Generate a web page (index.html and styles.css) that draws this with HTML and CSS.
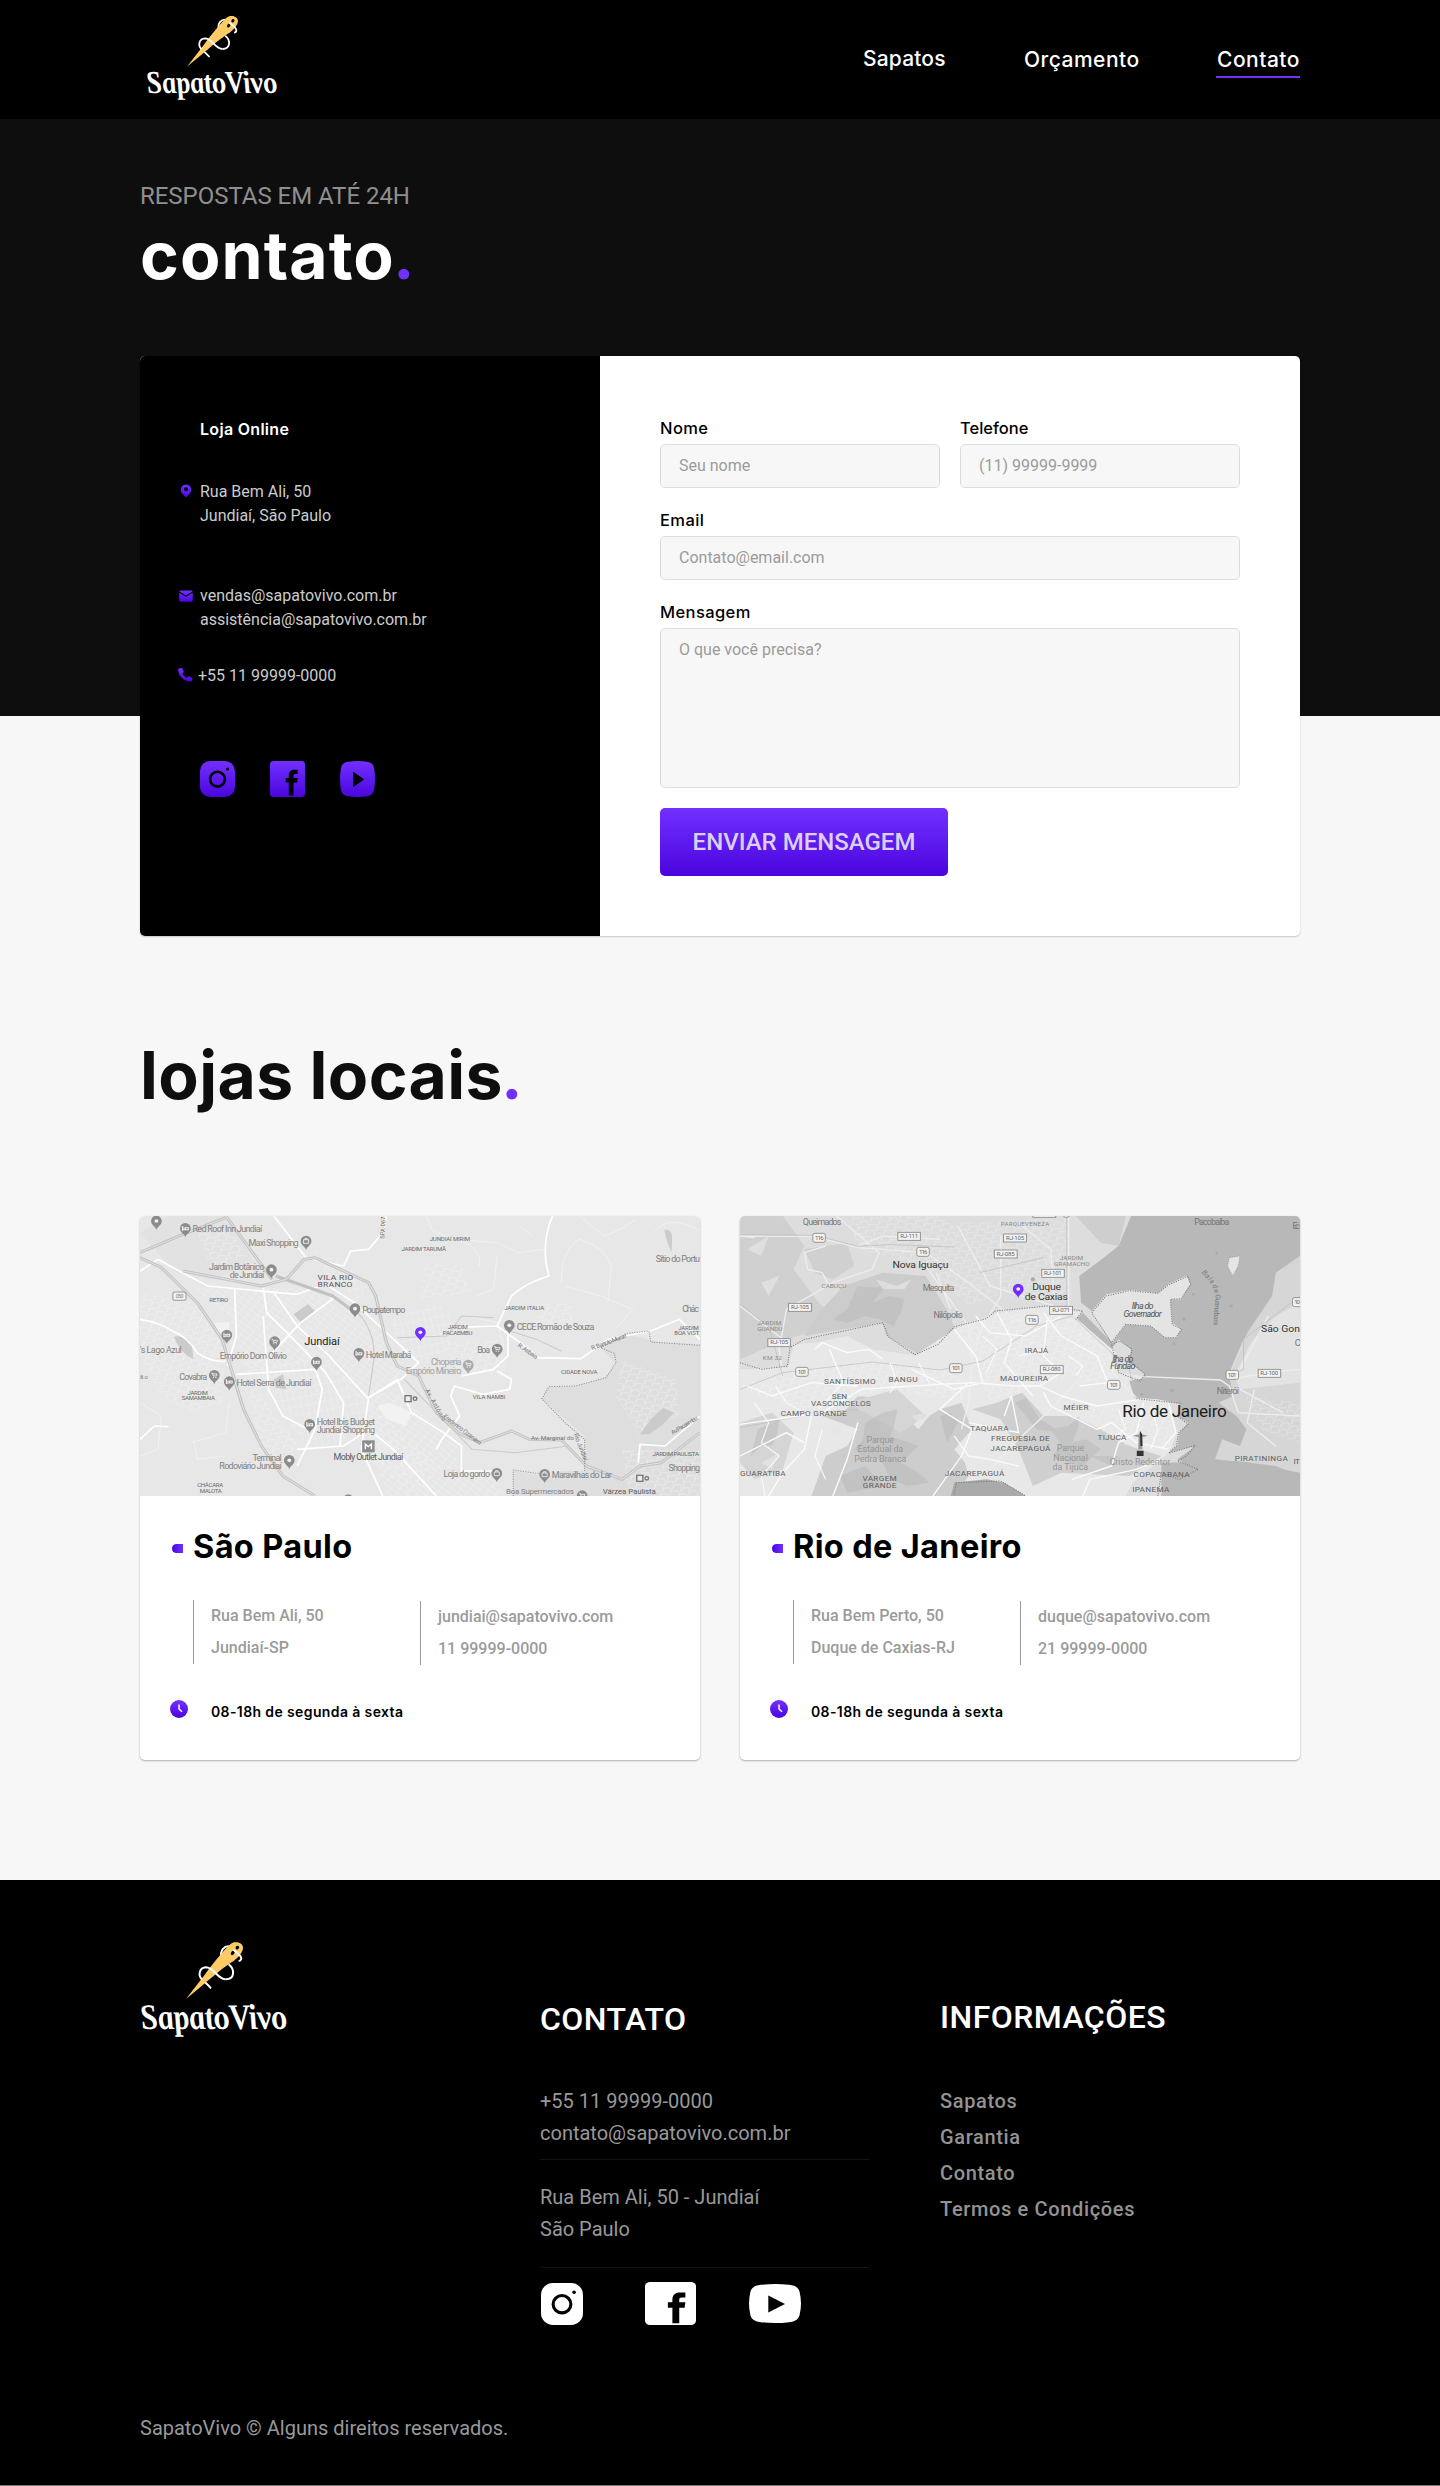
FILE: index.html
```html
<!DOCTYPE html>
<html lang="pt-BR">
<head>
<meta charset="utf-8">
<title>SapatoVivo | Contato</title>
<link rel="stylesheet" href="styles.css">
</head>
<body>

<svg class="sprite" width="0" height="0" aria-hidden="true">
  <defs>
    <linearGradient id="violet" x1="0" y1="0" x2="0" y2="1"><stop offset="0" stop-color="#7230ff"/><stop offset="1" stop-color="#4a05de"/></linearGradient>
    <linearGradient id="violet-side" x1="0" y1="0" x2="1" y2="0"><stop offset="0" stop-color="#4a05de"/><stop offset="1" stop-color="#7230ff"/></linearGradient>
    <symbol id="logo" viewBox="30 90 450 300">
      <path d="M214 206C220 214 230 220 243 235" fill="none" stroke="#fff" stroke-width="6"/>
      <path d="M302 110C284 104 268 122 275 144M296 163C315 178 315 207 287 208" fill="none" stroke="#fff" stroke-width="6"/>
      <path d="M168 267L222 197C252 155 288 113 303 101C315 92 338 97 339 112C340 125 328 140 312 152C284 169 250 198 215 228Z" fill="#ffcb66"/>
      <ellipse cx="322" cy="113" rx="5" ry="6" transform="rotate(35 322 113)" fill="#000"/>
      <ellipse cx="308" cy="129" rx="5" ry="7" transform="rotate(40 308 129)" fill="#000"/>
      <path d="M287 208C262 207 252 172 228 172C208 173 203 196 216 208M310 119C316 124 322 128 331 138C336 145 334 152 326 153" fill="none" stroke="#fff" stroke-width="6"/>
      <text transform="translate(38 357) skewX(13)" font-family="'Liberation Serif',serif" font-style="italic" font-weight="700" font-size="108" textLength="440" lengthAdjust="spacingAndGlyphs" fill="#fff">SapatoVivo</text>
    </symbol>
    <symbol id="instagram" viewBox="0 0 35 36" preserveAspectRatio="none">
      <rect width="35" height="36" rx="10" ry="10"/><circle cx="17.5" cy="18.2" r="7.4" fill="none" stroke="#000" stroke-width="2.6"/><circle cx="27.6" cy="8" r="1.5" fill="#000"/>
    </symbol>
    <symbol id="facebook" viewBox="0 0 35 36" preserveAspectRatio="none">
      <rect width="35" height="36" rx="3.5"/><path d="M18.8 34.5V21.5H15.7V16.9H18.8V14.4C18.8 10.8 20.8 8.7 24 8.7H27.7V13H25.2C24 13 23.5 13.6 23.5 15V16.9H27.7L27.2 21.5H23.5V34.5Z" fill="#000"/>
    </symbol>
    <symbol id="youtube" viewBox="0 0 35 36" preserveAspectRatio="none">
      <path d="M8 .8Q17.5-.8 27 .8Q33 1.5 34 7Q36 18 34 29Q33 34.500 27 35.2Q17.500 36.800 8 35.200Q2 34.500 1 29Q-1 18 1 7Q2 1.500 8 .8Z"/><path d="M13 10.500L24.200 18.500L13 26.300Z" fill="#000"/>
    </symbol>
    <g id="pin"><path d="M0 26C-2 16-15 12-15-1A15 16 0 1 1 15-1C15 12 2 16 0 26Z"/><circle cy="-1" r="5.500" fill="#f2f2f2"/></g>
    <g id="pin-bed"><path d="M0 26C-2 16-15 12-15-1A15 16 0 1 1 15-1C15 12 2 16 0 26Z"/><path d="M-8-8V6M-8 3H8V-3H0V2M-4-4V0" fill="none" stroke="#f2f2f2" stroke-width="3"/></g>
    <g id="pin-cart"><path d="M0 26C-2 16-15 12-15-1A15 16 0 1 1 15-1C15 12 2 16 0 26Z"/><path d="M-9-8H-5L-3 1H6L8-5H-4" fill="none" stroke="#f2f2f2" stroke-width="2.500"/><path d="M-4 4h3v3h-3zM3 4h3v3h-3z" fill="#f2f2f2"/></g>
    <g id="pin-bag"><path d="M0 26C-2 16-15 12-15-1A15 16 0 1 1 15-1C15 12 2 16 0 26Z"/><path d="M-7-5H7V6H-7ZM-3-5V-9H3V-5" fill="none" stroke="#f2f2f2" stroke-width="2.500"/></g>
    <pattern id="blocks-a" width="22" height="15" patternUnits="userSpaceOnUse" patternTransform="rotate(38)"><path d="M0 0H22M0 0V15" fill="none" stroke="#fafafa" stroke-width="1.600"/></pattern>
    <pattern id="blocks-b" width="17" height="26" patternUnits="userSpaceOnUse" patternTransform="rotate(-12)"><path d="M0 0H17M0 0V26" fill="none" stroke="#f8f8f8" stroke-width="1.500"/></pattern>
    <pattern id="blocks-c" width="24" height="20" patternUnits="userSpaceOnUse" patternTransform="rotate(22)"><path d="M0 0L9 8L24 0M9 8V20" fill="none" stroke="#f6f6f6" stroke-width="1.500"/></pattern>
  </defs>
</svg>

<header class="topbar">
  <svg class="logo logo-top" role="img" aria-label="SapatoVivo"><use href="#logo"/></svg>
  <nav class="nav">
    <a class="nav-link nav-sapatos">Sapatos</a>
    <a class="nav-link nav-orcamento">Orçamento</a>
    <a class="nav-link nav-contato">Contato</a>
  </nav>
</header>

<main class="main">
  <p class="kicker">RESPOSTAS EM ATÉ 24H</p>
  <h1 class="title title-light">contato<span class="dot">.</span></h1>

  <section class="contact">
    <div class="online">
      <h2 class="online-title">Loja Online</h2>
      <div class="row row-address">
        <svg class="row-icon" viewBox="0 0 16 24"><path fill-rule="evenodd" d="M8 4.500A5.300 5.300 0 0 1 13.300 9.800C13.300 13 10 15.500 8 17.500C6 15.500 2.700 13 2.700 9.800A5.300 5.300 0 0 1 8 4.500ZM8 7.300A2 2 0 1 0 8 11.300A2 2 0 1 0 8 7.300Z" fill="url(#violet)"/></svg>
        <p>Rua Bem Ali, 50<br>Jundiaí, São Paulo</p>
      </div>
      <div class="row row-mail">
        <svg class="row-icon" viewBox="0 0 16 24"><path d="M2.500 6.500H13.500L14.800 7.500L8 11.500L1.200 7.500ZM1.200 8.800L8 12.800L14.800 8.800V16Q14.800 17.800 13 17.800H3Q1.200 17.800 1.200 16Z" fill="url(#violet)"/></svg>
        <p>vendas@sapatovivo.com.br<br>assistência@sapatovivo.com.br</p>
      </div>
      <div class="row row-phone">
        <svg class="row-icon" viewBox="0 0 16 24"><path d="M.6 4.700L3.300 4.100Q4.200 4 4.600 4.900L5.800 7.500Q6 8.300 5.300 8.800L4.200 9.700Q6 12.500 8.800 14L9.800 12.700Q10.300 12.100 11.200 12.400L13.900 13.500Q14.700 14 14.500 14.800L14 16.700Q13.700 17.500 12.800 17.500Q7.500 17.500 3.800 13.800Q.2 10 0 5.700Q0 4.900.6 4.700Z" fill="url(#violet)"/></svg>
        <p>+55 11 99999-0000</p>
      </div>
      <div class="social">
        <svg class="social-icon"><use href="#instagram"/></svg>
        <svg class="social-icon"><use href="#facebook"/></svg>
        <svg class="social-icon"><use href="#youtube"/></svg>
      </div>
    </div>
    <form class="form">
      <div class="field"><label class="label" for="nome">Nome</label><input class="input" id="nome" placeholder="Seu nome"></div>
      <div class="field"><label class="label label-tight" for="telefone">Telefone</label><input class="input" id="telefone" placeholder="(11) 99999-9999"></div>
      <div class="field field-wide"><label class="label" for="email">Email</label><input class="input" id="email" placeholder="Contato@email.com"></div>
      <div class="field field-wide"><label class="label" for="mensagem">Mensagem</label><textarea class="input input-area" id="mensagem" placeholder="O que você precisa?"></textarea></div>
      <button class="send" type="button">ENVIAR MENSAGEM</button>
    </form>
  </section>

  <h2 class="title title-stores">lojas locais<span class="dot">.</span></h2>

  <section class="stores">
    <article class="store">
      <svg class="map" viewBox="0 0 1568 840" preserveAspectRatio="none">
        <rect width="1568" height="840" fill="#e7e7e7"/>
        <path d="M1568 385L1440 375L1360 355L1290 395L1335 445L1300 485L1220 510L1145 512L1125 548L1245 660V765L1320 790L1350 840H1568Z" fill="#dedede"/>
        <path d="M1045 765L1130 780L1180 765H1320L1350 840H1045Z" fill="#dfdfdf"/>
        <path d="M0 50L80 0H250L320 140L200 190L100 170Z" fill="#e2e2e2"/>
        <path d="M150 215H520L690 370L740 470L620 560L520 440L300 470L250 300Z" fill="url(#blocks-a)"/>
        <path d="M280 430H520L640 560L850 760L750 840L600 660L480 700L380 580Z" fill="url(#blocks-b)"/>
        <path d="M640 530L720 530L890 690V760L1000 780L1020 840H700L640 700Z" fill="url(#blocks-a)"/>
        <path d="M480 100L560 130L640 200L620 260L520 170ZM700 310L830 260L880 300L850 450L730 420Z" fill="url(#blocks-b)"/>
        <path d="M0 230L160 260L240 400L230 560L150 590L60 540L0 420ZM300 480L380 600L450 690L400 760L330 700Z" fill="url(#blocks-c)"/>
        <path d="M160 50L260 50L300 120L200 160ZM800 140L900 150L930 230L780 250ZM1130 260H1210V340L1100 320ZM1350 430L1500 490L1510 600L1400 660L1330 540ZM850 380L1000 370L1030 480L870 470ZM1350 700H1568V840H1370Z" fill="url(#blocks-c)"/>
        <path d="M430 295L470 265L490 285L452 322ZM95 362Q120 355 145 385L150 430Q110 410 95 362ZM1468 42Q1492 38 1490 75L1488 110Q1475 80 1468 42ZM1400 655L1430 610L1465 575L1495 590L1460 630L1425 655ZM375 490L400 475L410 520L380 515Z" fill="#cbcbcb"/>
        <path d="M210 320L250 318V355L215 345ZM665 570L700 560L760 590L745 630L690 610Z" fill="#f2f2f2"/>
        <g fill="none" stroke="#f5f5f5" stroke-width="2">
          <path d="M800 0L820 45L880 70L1000 80L1060 110L1130 100M1230 0L1300 60L1345 40L1390 10M1180 200Q1180 100 1230 70Q1300 90 1320 150L1310 260M1000 120L990 220L940 240M0 560L60 600L50 700L0 720M145 680L240 650L250 560M920 300L1000 320L1020 400M880 70Q960 90 950 150M1190 210L1290 240L1380 280L1330 340M1060 30L1100 60M1440 50Q1480 -10 1568 45M230 720L160 730L150 670"/>
        </g>
        <g fill="none" stroke="#fff" stroke-width="5" stroke-linejoin="round">
          <path d="M0 310Q60 320 90 345Q130 360 160 410Q200 440 240 435M0 165L50 130L110 165L190 210L440 235L520 205L600 260L780 440L730 490L640 545L620 700L680 840M265 220L270 360L245 450M345 215L355 290L430 370L520 470L570 560L560 690M345 300L360 520L400 600L470 640M270 475L490 460L505 440M490 460L510 520L490 640L440 750M375 230L440 330L530 420L640 550M640 545L720 490L760 590L850 650L900 690V765L1000 765"/>
          <path d="M375 0L465 125L570 150L590 105L640 100L680 50L690 0M1155 0Q1120 90 1145 180Q1080 200 1040 240L1000 330L870 335M1000 330L1090 400L1115 425L1235 428L1310 370L1430 345L1510 310L1568 370M1030 350V420L990 460L900 480M1000 465L1040 490L1035 520L960 535L880 510L870 540L895 600L845 670L830 700M550 240L450 320L370 410M440 700L570 690L640 640L710 700L830 840M1395 740L1400 685L1470 690L1568 600M0 670L40 630L80 632"/>
        </g>
        <g fill="none" stroke-linejoin="round">
          <g stroke="#c2c2c2" stroke-width="9"><path d="M0 125L60 155L160 260L230 370L290 580L340 690L400 780L490 840M0 110L120 55L240 5M120 165L340 210L410 190L460 130L490 125L640 200L660 240L690 380L720 450L780 480L830 590L890 650L950 680L1040 645L1090 670L1180 672L1250 750L1350 790L1400 750L1460 740L1568 650M240 0L370 190M380 180L540 240L590 280"/></g>
          <g stroke="#e1e1e1" stroke-width="3"><path d="M0 125L60 155L160 260L230 370L290 580L340 690L400 780L490 840M0 110L120 55L240 5M120 165L340 210L410 190L460 130L490 125L640 200L660 240L690 380L720 450L780 480L830 590L890 650L950 680L1040 645L1090 670L1180 672L1250 750L1350 790L1400 750L1460 740L1568 650M240 0L370 190"/></g>
          <path d="M600 280Q660 340 655 430L640 540M720 365L860 360L900 300L990 305M740 490L830 590L930 700L1050 710L1200 690M1020 340L1110 370L1180 405" stroke="#cacaca" stroke-width="3"/>
          <path d="M1568 388L1430 378L1425 345L1365 352L1290 395L1328 412L1333 440L1305 485L1220 510L1145 512L1125 548L1190 620L1245 670V765M1045 840V762L1130 775" stroke="#8d8d8d" stroke-width="3" stroke-dasharray="3 4"/>
        </g>
        <rect x="92" y="228" width="37" height="25" rx="6" fill="#f2f2f2" stroke="#999" stroke-width="3"/>
        <g fill="#8c8c8c">
          <use href="#pin" x="46" y="16"/><use href="#pin-bed" x="127" y="38"/><use href="#pin-bag" x="465" y="76"/><use href="#pin" x="368" y="162"/><use href="#pin" x="602" y="279"/><use href="#pin" x="1034" y="329"/><use href="#pin-bed" x="243" y="358"/><use href="#pin-cart" x="377" y="378"/><use href="#pin-bed" x="613" y="413"/><use href="#pin-bed" x="494" y="439"/><use href="#pin-cart" x="1000" y="400"/><use href="#pin-cart" x="208" y="479"/><use href="#pin-bed" x="250" y="498"/><use href="#pin-bed" x="475" y="626"/><use href="#pin" x="418" y="734"/><use href="#pin-bag" x="999" y="773"/><use href="#pin-bag" x="1133" y="776"/><use href="#pin-cart" x="1238" y="840"/><use href="#pin" x="583" y="852"/><use href="#pin-cart" x="919" y="448" fill="#aaa"/>
          <rect x="622" y="673" width="35" height="36"/><path d="M631 700V684L639 692L648 684V700" fill="none" stroke="#fff" stroke-width="4"/>
        </g>
        <g fill="#eee" stroke="#777" stroke-width="4"><rect x="742" y="539" width="17" height="18"/><circle cx="770" cy="548" r="5"/><rect x="1391" y="778" width="17" height="18"/><circle cx="1419" cy="787" r="5"/></g>
        <use href="#pin" x="785" y="350" fill="#7230ff"/>
        <g class="map-text">
          <text x="100" y="246" font-size="15" textLength="22">050</text>
          <text x="147" y="48" textLength="195">Red Roof Inn Jundiaí</text><text x="304" y="89" textLength="140">Maxi Shopping</text><text x="193" y="162" textLength="155">Jardim Botânico</text><text x="251" y="186" textLength="97">de Jundiaí</text><text x="622" y="290" textLength="121">Poupatempo</text><text x="1055" y="341" textLength="217">CECE Romão de Souza</text><text x="632" y="426" textLength="128">Hotel Marabá</text><text x="223" y="429" textLength="188">Empório Dom Olívio</text><text x="0" y="411" textLength="117">'s Lago Azul</text><text x="944" y="411" textLength="36">Boa</text><text x="110" y="491" textLength="78">Covabra</text><text x="270" y="511" textLength="210">Hotel Serra de Jundiaí</text><text x="0" y="488" font-size="17" textLength="22">ão</text><text x="495" y="626" textLength="163">Hotel Ibis Budget</text><text x="495" y="650" textLength="163">Jundiaí Shopping</text><text x="315" y="734" textLength="82">Terminal</text><text x="222" y="758" textLength="175">Rodoviário Jundiaí</text><text x="850" y="784" textLength="130">Loja do gordo</text><text x="1153" y="787" textLength="168">Maravilhas do Lar</text><text x="1480" y="766" textLength="88">Shopping</text><text x="1444" y="138" textLength="124">Sítio do Portu</text><text x="1518" y="287" textLength="47">Chác</text><text x="1025" y="834" font-size="22" textLength="190">Boa Supermercados</text>
          <g fill="#a2a2a2"><text x="815" y="448" textLength="85">Choperia</text><text x="744" y="473" textLength="156">Empório Mineiro</text></g>
          <g fill="#5c5c5c"><text x="542" y="733" textLength="195">Mobly Outlet Jundiaí</text><text x="1296" y="834" font-size="22" textLength="148">Várzea Paulista</text></g>
          <g class="map-area"><text x="811" y="75" textLength="113">JUNDIAÍ MIRIM</text><text x="732" y="104" textLength="125">JARDIM TARUMÃ</text><text x="194" y="259" textLength="53">RETIRO</text><text x="1020" y="281" textLength="112">JARDIM ITALIA</text><text x="862" y="340" textLength="56">JARDIM</text><text x="848" y="356" textLength="83">PACAEMBU</text><text x="1507" y="341" textLength="58">JARDIM</text><text x="1496" y="357" textLength="70">BOA VIST</text><text x="1179" y="473" textLength="102">CIDADE NOVA</text><text x="932" y="548" textLength="91">VILA NAMBI</text><text x="133" y="537" textLength="57">JARDIM</text><text x="117" y="552" textLength="93">SAMAMBAIA</text><text x="1435" y="719" textLength="130">JARDIM PAULISTA</text><text x="160" y="812" textLength="73">CHÁCARA</text><text x="167" y="832" textLength="62">MALOTA</text><text transform="translate(684 68) rotate(-87)" textLength="66">SPA-067</text></g>
          <g fill="#555"><text x="497" y="192" font-size="24" textLength="100">VILA RIO</text><text x="497" y="214" font-size="24" textLength="98">BRANCO</text></g>
          <g fill="#777"><text transform="translate(798 523) rotate(62)" font-size="18" textLength="105">Av. Antônio</text><text transform="translate(848 604) rotate(39)" font-size="18" textLength="132">Frederico Ozanam</text><text x="1095" y="672" font-size="18" textLength="120">Av. Marginal do</text><text transform="translate(1214 655) rotate(70)" font-size="18" textLength="85">Rio Jundiaí</text><text transform="translate(1056 391) rotate(36)" font-size="18" textLength="65">R. Atibaia</text><text transform="translate(1266 403) rotate(-22)" font-size="18" textLength="105">R. Bartolo Murari</text><text transform="translate(1492 656) rotate(-33)" font-size="18" textLength="85">Av. Pacaembu</text></g>
          <text x="460" y="387" font-size="31" fill="#1c1c1c" textLength="99">Jundiaí</text>
        </g>
      </svg>
      <div class="store-body">
        <h3 class="store-title"><svg class="tag" viewBox="0 0 11 9"><path d="M4 0H11V9H4Q0 8.500 0 4.500T4 0Z" fill="url(#violet-side)"/></svg>São Paulo</h3>
        <div class="store-info"><p class="col">Rua Bem Ali, 50<br>Jundiaí-SP</p><p class="col col-right">jundiai@sapatovivo.com<br>11 99999-0000</p></div>
        <p class="hours"><svg class="clock" viewBox="0 0 18 18"><circle cx="9" cy="9" r="9" fill="url(#violet)"/><path d="M9 4.500V9L12 11.800" fill="none" stroke="#fff" stroke-width="1.500"/></svg>08-18h de segunda à sexta</p>
      </div>
    </article>

    <article class="store">
      <svg class="map" viewBox="0 0 1568 840" preserveAspectRatio="none">
        <rect width="1568" height="840" fill="#dddddd"/>
        <path d="M0 0H120L180 90L150 160L220 260L290 320L130 370L0 430ZM180 100L300 80L320 150L260 190L210 170Z" fill="#d0d0d0"/>
        <path d="M290 210L400 170L520 180L590 300L600 340L500 415L410 360L400 320L180 360L220 290Z" fill="#cccccc"/>
        <path d="M940 0H1080L1060 90L1010 80Z" fill="#cecece"/>
        <path d="M0 460L135 455L150 385L210 380L300 360L370 400L490 418L600 340L720 290L870 270L960 290L1040 390L1060 470L1130 480L1110 545L1200 550L1225 650L1200 710L1100 800L1080 840H0Z" fill="#e8e8e8"/>
        <path d="M230 600L290 590L330 540L380 545L420 590L460 600L500 640L530 600L560 580L620 560L650 640L600 700L630 740L640 780L600 840H200L240 720L300 690L330 640Z" fill="#cdcdcd"/>
        <path d="M650 580L720 560L790 530L850 600L930 600L1010 640L1090 690L1180 720L1090 780L900 770L820 810L780 700L730 610Z" fill="#cfcfcf"/>
        <path d="M0 620L90 590L150 650L120 760L40 790L0 740ZM300 560L440 520L520 600L450 650Z" fill="#d5d5d5"/>
        <g fill="#b4b4b4" opacity=".4"><path d="M350 620L400 590L440 580L430 640L420 660L500 690L470 720L450 740L500 770L530 800L470 810L420 790L400 740L370 720L350 730L320 700L345 670ZM870 640L920 630L950 600L945 640L930 680L970 670L1010 700L960 750L920 740L880 720L895 680ZM50 640L110 610L105 650L90 690L60 690L30 720Z"/><path d="M330 210L380 215L420 200L395 230L370 260L420 240L460 250L450 290L430 330L390 310L350 300L300 320L260 310L300 280ZM560 600L590 590L610 620L580 680ZM280 780L350 750L400 810L300 830ZM770 560L800 545L840 610L900 650L830 640ZM980 720L1060 720L1040 750Z"/></g>
        <path d="M380 190L440 210L480 190L460 220L400 220ZM250 640L290 620L270 660ZM480 600L520 590L500 620ZM60 740L110 710L90 760ZM20 100L80 60L60 120ZM60 200L110 180L80 240Z" fill="#e6e6e6" opacity=".7"/>
        <path d="M1095 0L1060 90L1000 140L950 180L955 260L985 285L1025 235L1090 222L1170 232L1200 205L1250 180L1260 205L1235 250L1205 250L1210 320L1235 340L1220 365L1190 365L1150 330L1080 325L1042 380L960 290L940 310L1040 400L1060 370L1095 400L1090 440L1130 470L1135 485L1090 495L1105 545L1170 550L1235 565L1225 600L1255 620L1230 650L1225 690L1200 710L1275 690L1225 730L1280 760L1230 790L1180 770L1190 840H1568V740L1500 690L1480 600L1420 580L1380 500L1370 470L1410 370L1500 280L1568 240V0Z" fill="#b8b8b8"/>
        <path d="M985 288L1025 237L1090 222L1170 232L1200 205L1250 180L1260 205L1235 250L1205 250L1210 320L1235 340L1220 365L1190 365L1150 330L1080 325L1042 380Z" fill="#e4e4e4"/>
        <path d="M1568 120L1500 170L1490 240L1420 350L1395 420L1370 480L1380 540L1340 560L1390 600L1418 640L1400 690L1350 670L1330 730L1420 740L1568 770Z" fill="#d6d6d6"/>
        <path d="M1500 300L1568 260V500L1400 520L1385 480L1430 380Z" fill="#e3e3e3"/>
        <path d="M1180 740L1390 735L1500 750L1568 780V840H1180Z" fill="#b8b8b8"/>
        <path d="M600 800L690 790L740 800L800 840H590Z" fill="#aaa"/>
        <path d="M1370 125L1400 120L1395 150L1380 180L1365 150Z" fill="#e5e5e5" stroke="#888" stroke-width="2" stroke-dasharray="3 4"/>
        <path d="M0 510L240 450L380 430L560 460L640 480L620 560L420 520L200 580L60 540ZM610 330L720 290L940 300L1030 400L1040 520L920 480L700 560L650 440Z" fill="url(#blocks-c)"/>
        <path d="M300 0H560L680 90L720 240L640 270L520 150L330 100ZM600 20L920 10L930 260L760 250ZM960 570H1210V700L1080 690L1000 640ZM1410 540L1568 560V680L1460 640Z" fill="url(#blocks-c)" opacity=".8"/>
        <g fill="none" stroke="#ededed" stroke-width="4">
          <path d="M0 60L210 62L330 95L520 110L640 200L770 310L920 340L1030 400L1050 480L1110 545M270 0L390 110L370 160L260 200L130 280L110 400L120 480M920 0V290L1050 410L1040 480L940 500L870 580L770 680L700 760M520 150L640 330L650 430L640 560L620 640M550 170L590 280M330 90L400 60L560 70M730 60V240L680 330L650 430M0 60L40 65M0 270L120 370M610 30L700 210L880 270M780 20L870 100L880 240M240 90L180 110L190 160L230 170L250 210"/>
          <path d="M1135 482L1345 492L1370 510L1395 590L1568 600M1370 490L1480 470L1568 460M1480 300L1400 460M1400 520L1520 590M1440 520L1420 620L1500 690"/>
        </g>
        <g fill="none" stroke="#bcbcbc" stroke-width="2"><path d="M0 56L210 58L330 91L420 86L600 93M0 520L120 470L370 438L560 462L680 435L830 330L930 300L1090 460L1110 540M915 0V280M1130 474L1345 487L1410 460V370L1568 240M670 170L850 125M120 480L80 330L0 265M0 635L220 590L330 580"/></g>
        <g fill="none" stroke="#fbfbfb" stroke-width="4" stroke-linejoin="round">
          <path d="M0 625L230 590L340 520L480 510L650 500L770 510L840 510L900 540L1000 570L1120 550M20 510L90 540L200 500L330 510M250 400L290 500L220 580M600 340L660 420L680 500L600 520L480 460M720 290L760 370L740 440L820 540M850 290L900 360L1000 420L1030 500L950 510M860 310L850 420L900 470L840 510M640 620L780 650L760 540L740 600M330 620L300 730L260 840M200 600L180 700L120 770L80 840M0 720L130 650L180 680M540 840L620 720L650 640L560 580L640 500M850 530L870 570L1000 640L1040 620L1110 680L1200 700M1130 560L1110 650L1060 680L1040 750L930 790M960 840L980 790L1110 760L1180 730M1200 560L1220 650L1180 700M600 660L640 720L700 730L780 750M210 400L230 380L300 410L360 400L400 430M660 300L700 350L800 360L900 300"/>
          <path d="M40 560L80 620L60 680L110 720L60 780L70 840M230 640L210 720L240 790M100 510L130 560L180 590M420 440L440 500L420 530M500 440L530 500M690 470L720 400L680 360M780 420L850 400M920 420L960 450L940 480M1060 580L1080 640L1050 660M1150 570L1170 640L1150 700" stroke-width="3"/>
        </g>
        <path d="M0 440L60 460L133 450L140 395L180 370L400 320L415 362L490 416L555 385L600 332L690 308L715 285L860 270L960 285L940 310" fill="none" stroke="#777" stroke-width="3" stroke-dasharray="3 4"/>
        <path d="M985 290L1025 240L1090 224L1170 232L1200 207L1255 180L1262 205L1235 248L1205 250L1210 325L1237 340L1220 365L1190 365L1150 330L1080 325L1040 380L985 290ZM1040 385L1065 375L1098 400L1090 435L1135 475L1120 495L1060 470ZM1110 548L1235 562L1225 600L1255 625L1228 650L1222 690L1200 712L1275 688L1250 720L1225 735L1283 760L1230 790L1180 770L1170 840M600 835L605 800L730 795L800 840" fill="none" stroke="#777" stroke-width="3" stroke-dasharray="3 4"/>
        <g fill="#aaa"><circle cx="1270" cy="235" r="4"/><circle cx="1243" cy="310" r="5"/><circle cx="1335" cy="112" r="4"/><circle cx="1375" cy="270" r="5"/><circle cx="1210" cy="523" r="5"/><circle cx="1125" cy="535" r="4"/><circle cx="820" cy="190" r="6"/><circle cx="1215" cy="383" r="4"/></g>
        <g fill="#f2f2f2" stroke="#888" stroke-width="2.500">
          <rect x="204" y="52" width="35" height="27" rx="6"/><rect x="495" y="94" width="35" height="27" rx="6"/><rect x="800" y="298" width="35" height="27" rx="6"/><rect x="156" y="454" width="35" height="27" rx="6"/><rect x="587" y="443" width="35" height="27" rx="6"/><rect x="1029" y="493" width="35" height="27" rx="6"/><rect x="1361" y="463" width="35" height="27" rx="6"/><rect x="1547" y="245" width="35" height="27" rx="6"/>
          <rect x="442" y="49" width="63" height="24"/><rect x="738" y="54" width="64" height="24"/><rect x="712" y="102" width="64" height="24"/><rect x="845" y="160" width="63" height="24"/><rect x="136" y="262" width="64" height="24"/><rect x="867" y="271" width="64" height="24"/><rect x="78" y="368" width="63" height="24"/><rect x="841" y="449" width="64" height="24"/><rect x="1451" y="460" width="63" height="24"/><rect x="820" y="-18" width="64" height="22"/><circle cx="914" cy="-8" r="12"/>
        </g>
        <path d="M1120 645L1124 655L1142 659L1126 664L1127 700H1115L1116 664L1100 659L1117 655Z" fill="#999"/><path d="M1120 645L1126 655L1127 690H1121ZM1111 704H1130V720H1111Z" fill="#333"/>
        <use href="#pin" x="779" y="220" fill="#7230ff"/>
        <g class="map-text map-text-rio">
          <g font-size="17"><text x="210" y="71" textLength="24">116</text><text x="501" y="114" textLength="24">116</text><text x="806" y="318" textLength="24">116</text><text x="162" y="474" textLength="24">101</text><text x="593" y="462" textLength="24">101</text><text x="1035" y="513" textLength="24">101</text><text x="1366" y="483" textLength="24">101</text><text x="1552" y="264" textLength="16">10</text>
          <text x="449" y="66" textLength="50">RJ-111</text><text x="745" y="71" textLength="51">RJ-105</text><text x="719" y="119" textLength="50">RJ-085</text><text x="851" y="177" textLength="50">RJ-101</text><text x="143" y="279" textLength="50">RJ-105</text><text x="874" y="288" textLength="50">RJ-071</text><text x="85" y="385" textLength="50">RJ-105</text><text x="848" y="466" textLength="50">RJ-080</text><text x="1457" y="477" textLength="50">RJ-100</text></g>
          <g fill="#777"><text x="176" y="26" textLength="108">Queimados</text><text x="512" y="226" textLength="88">Mesquita</text><text x="542" y="305" textLength="82">Nilópolis</text><text x="1272" y="26" textLength="98">Pacobaíba</text><text x="1335" y="534" textLength="62">Niterói</text><text x="1547" y="38" textLength="20">Ec</text><text x="1553" y="389" textLength="14">C</text></g>
          <g fill="#888"><text x="730" y="30" font-size="17" textLength="136">PARQUEVENEZA</text><text x="895" y="132" font-size="18" textLength="66">JARDIM</text><text x="879" y="150" font-size="18" textLength="100">GRAMACHO</text><text x="228" y="216" font-size="18" textLength="70">CABUÇU</text><text x="48" y="328" font-size="18" textLength="68">JARDIM</text><text x="48" y="346" font-size="18" textLength="71">GUANDU</text><text x="64" y="432" font-size="18" textLength="53">KM 32</text></g>
          <g fill="#969696" font-size="25"><text x="354" y="681" textLength="77">Parque</text><text x="329" y="709" textLength="128">Estadual da</text><text x="320" y="738" textLength="146">Pedra Branca</text><text x="887" y="706" textLength="77">Parque</text><text x="877" y="734" textLength="97">Nacional</text><text x="875" y="762" textLength="100">da Tijuca</text><text x="1035" y="747" textLength="170">Cristo Redentor</text></g>
          <g fill="#5e5e5e" font-size="23"><text x="797" y="410" textLength="66">IRAJÁ</text><text x="728" y="495" textLength="135">MADUREIRA</text><text x="235" y="504" textLength="145">SANTÍSSIMO</text><text x="416" y="498" textLength="81">BANGU</text><text x="257" y="548" textLength="43">SEN</text><text x="199" y="570" textLength="167">VASCONCELOS</text><text x="114" y="599" textLength="185">CAMPO GRANDE</text><text x="906" y="581" textLength="70">MÉIER</text><text x="645" y="644" textLength="107">TAQUARA</text><text x="703" y="676" textLength="164">FREGUESIA DE</text><text x="701" y="704" textLength="168">JACAREPAGUÁ</text><text x="1001" y="672" textLength="81">TIJUCA</text><text x="573" y="780" textLength="167">JACAREPAGUÁ</text><text x="0" y="780" textLength="128">GUARATIBA</text><text x="343" y="794" textLength="96">VARGEM</text><text x="344" y="815" textLength="94">GRANDE</text><text x="1102" y="783" textLength="157">COPACABANA</text><text x="1098" y="829" textLength="104">IPANEMA</text><text x="1385" y="735" textLength="149">PIRATININGA</text><text x="1550" y="744" textLength="18">IT</text></g>
          <g fill="#555" font-style="italic"><text x="1097" y="280" textLength="61">Ilha do</text><text x="1074" y="303" textLength="107">Governador</text><text x="1042" y="437" textLength="60">Ilha do</text><text x="1037" y="459" textLength="70">Fundão</text></g>
          <g fill="#777"><text transform="translate(1292 169) rotate(52)" font-size="20" textLength="45">Baía</text><text transform="translate(1322 208) rotate(72)" font-size="20" textLength="25">de</text><text transform="translate(1332 235) rotate(94)" font-size="20" textLength="92">Guanabara</text></g>
          <g fill="#333" font-size="29"><text x="427" y="157" textLength="157">Nova Iguaçu</text><text x="818" y="223" textLength="81">Duque</text><text x="797" y="252" textLength="121">de Caxias</text><text x="1459" y="349" textLength="109">São Gon</text></g>
          <text x="1070" y="603" font-size="48" fill="#1c1c1c" textLength="293">Rio de Janeiro</text>
        </g>
      </svg>
      <div class="store-body">
        <h3 class="store-title"><svg class="tag" viewBox="0 0 11 9"><path d="M4 0H11V9H4Q0 8.500 0 4.500T4 0Z" fill="url(#violet-side)"/></svg>Rio de Janeiro</h3>
        <div class="store-info"><p class="col">Rua Bem Perto, 50<br>Duque de Caxias-RJ</p><p class="col col-right">duque@sapatovivo.com<br>21 99999-0000</p></div>
        <p class="hours"><svg class="clock" viewBox="0 0 18 18"><circle cx="9" cy="9" r="9" fill="url(#violet)"/><path d="M9 4.500V9L12 11.800" fill="none" stroke="#fff" stroke-width="1.500"/></svg>08-18h de segunda à sexta</p>
      </div>
    </article>
  </section>
</main>

<footer class="footer">
  <div class="footer-cols">
    <div><svg class="logo logo-footer" role="img" aria-label="SapatoVivo"><use href="#logo"/></svg></div>
    <div class="footer-contact">
      <h2 class="footer-title">CONTATO</h2>
      <p class="footer-block footer-phone">+55 11 99999-0000<br>contato@sapatovivo.com.br</p>
      <p class="footer-block footer-address">Rua Bem Ali, 50 - Jundiaí<br>São Paulo</p>
      <div class="footer-social">
        <svg class="fs-instagram"><use href="#instagram"/></svg>
        <svg class="fs-facebook"><use href="#facebook"/></svg>
        <svg class="fs-youtube"><use href="#youtube"/></svg>
      </div>
    </div>
    <div class="footer-info">
      <h2 class="footer-title">INFORMAÇÕES</h2>
      <ul class="footer-links"><li>Sapatos</li><li>Garantia</li><li>Contato</li><li>Termos e Condições</li></ul>
    </div>
  </div>
  <p class="copyright">SapatoVivo © Alguns direitos reservados.</p>
</footer>
</body>
</html>
```

FILE: styles.css
```css
* { box-sizing: border-box; margin: 0; padding: 0; }
body { width: 1440px; background: #f7f7f7; font-family: Roboto, sans-serif; color: #000; }
svg { display: block; flex: none; }
.sprite { position: absolute; }

.topbar { height: 119px; padding: 0 140px; background: #000; display: flex; justify-content: space-between; align-items: flex-start; }
.logo-top { width: 134px; height: 89px; margin: 14px 0 0 6px; }
.nav { display: flex; gap: 77px; padding-top: 48px; }
.nav-link { font: 500 21px/24px Inter, sans-serif; color: #fff; padding-left: 1px; letter-spacing: .48px; white-space: nowrap; }
.nav-sapatos { width: 84px; letter-spacing: .15px; margin-top: -1px; }
.nav-orcamento { width: 116px; }
.nav-contato { width: 84px; padding-bottom: 4px; border-bottom: 2px solid #7230ff; }

.main { padding: 63px 140px 120px; background: linear-gradient(#0e0e0e 597px, #f7f7f7 597px); }
.kicker { font-size: 24px; line-height: 28px; letter-spacing: -.03px; color: #8f8f8f; }
.title { font: 650 66px/80px Inter, sans-serif; color: #0e0e0e; white-space: nowrap; }
.title-light { margin-top: 5px; color: #fff; letter-spacing: 1.1px; }
.title-stores { margin-top: 99px; letter-spacing: .4px; }
.dot { font-family: Lato, sans-serif; font-weight: 900; color: #7230ff; letter-spacing: 0; line-height: 1; margin-left: 1px; }

.contact { margin-top: 61px; height: 580px; display: flex; border-radius: 5px; overflow: hidden; background: #fff; box-shadow: 0 1px 2px rgba(0, 0, 0, .2); }
.online { width: 460px; padding: 61px 0 0 38px; background: #000; color: #ccc; }
.online-title { font: 600 16px/24px Inter, sans-serif; letter-spacing: .3px; color: #fff; padding-left: 22px; }
.row { display: flex; font-size: 16px; line-height: 24px; }
.row-icon { width: 16px; height: 24px; margin-right: 6px; }
.row-address { margin-top: 39px; }
.row-mail { margin-top: 56px; }
.row-phone { margin-top: 32px; }
.row-phone .row-icon { margin-right: 4px; }
.social { display: flex; gap: 35px; margin: 73px 0 0 22px; }
.social-icon { width: 35px; height: 36px; fill: url(#violet); }

.form { flex: 1; padding: 60px; display: grid; grid-template-columns: 280px 280px; gap: 20px; align-content: start; }
.field-wide { grid-column: 1 / 3; }
.label { display: block; font: 500 16.5px/24px Inter, sans-serif; letter-spacing: .4px; margin-bottom: 4px; }
.label-tight { letter-spacing: 0; }
.input { display: block; width: 100%; height: 44px; padding: 0 18px 1px; border: 1px solid #dcdcdc; border-radius: 5px; background: #f7f7f7; font: 400 16px/24px Roboto, sans-serif; resize: none; }
.input::placeholder { color: #9b9b9b; opacity: 1; }
.input-area { height: 160px; padding-top: 9px; }
.send { width: 288px; height: 68px; border: 0; border-radius: 5px; background: linear-gradient(#7230ff, #4a05de); color: #dcd0fb; font: 500 24px/28px Roboto, sans-serif; }

.stores { margin-top: 101px; display: flex; gap: 40px; }
.store { width: 560px; height: 544px; border-radius: 5px; overflow: hidden; background: #fff; box-shadow: 0 1px 2px rgba(0, 0, 0, .3); }
.map { width: 560px; height: 280px; }
.map-text { font-family: Roboto, sans-serif; font-size: 25px; fill: #808080; }
.map-text-rio { fill: #666; }
.map-area { font-size: 17px; fill: #6a6a6a; }
.store-body { padding: 27px 0 0 30px; }
.store-title { display: flex; align-items: center; font: 650 32.5px/48px Inter, sans-serif; letter-spacing: .35px; }
.tag { width: 11px; height: 9px; margin: 2px 10px 0 2px; }
.store-info { display: flex; margin: 29px 0 0 23px; font-weight: 500; font-size: 16px; line-height: 32px; color: #9b9b9b; }
.col { width: 227px; height: 64px; padding-left: 17px; border-left: 1px solid #9b9b9b; white-space: nowrap; }
.col-right { margin-top: 1px; }
.hours { display: flex; align-items: flex-start; margin-top: 35px; font: 600 14px/24px Inter, sans-serif; letter-spacing: .38px; }
.clock { width: 18px; height: 18px; margin-right: 23px; }

.footer { height: 606px; padding: 60px 140px 0; background: #000; border-bottom: 1px solid #777; color: #999; font-size: 20px; }
.footer-cols { display: grid; grid-template-columns: 400px 400px 1fr; height: 472px; }
.logo-footer { width: 150px; height: 100px; }
.footer-title { font-weight: 500; font-size: 32px; line-height: 40px; letter-spacing: .43px; color: #fff; }
.footer-contact { padding-top: 59px; width: 329px; }
.footer-info { padding-top: 57px; }
.footer-block { line-height: 32px; border-bottom: 1px solid #131313; white-space: nowrap; }
.footer-phone { margin-top: 46px; padding-bottom: 10px; }
.footer-address { margin-top: 21px; padding-bottom: 22px; }
.footer-social { display: flex; align-items: center; margin: 14px 0 0 1px; }
.fs-instagram { width: 42px; height: 42px; margin-right: 62px; fill: #fff; }
.fs-facebook { width: 51px; height: 43px; margin-right: 53px; fill: #fff; }
.fs-youtube { width: 52px; height: 39px; fill: #fff; }
.footer-links { list-style: none; margin-top: 46px; line-height: 36px; font-weight: 500; letter-spacing: .65px; color: #939393; }
.copyright { line-height: 32px; }
```
